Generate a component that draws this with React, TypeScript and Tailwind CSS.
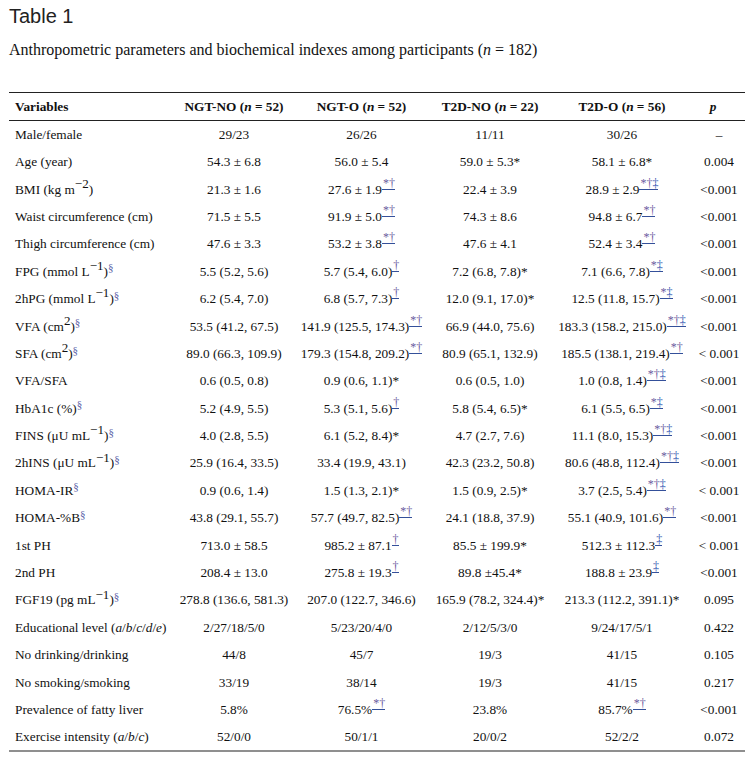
import React from 'react';

type Cell = { v: string; m?: string };
type Row = { label: React.ReactNode; cells: Cell[]; p: string };

// superscript link marks (*, †, ‡) drawn like the journal's underlined footnote links
const Mark: React.FC<{ s: string }> = ({ s }) => (
  <span className="inline-block align-[7px] leading-[12px] text-[12px] border-b border-[#34509a] pl-[1px]">
    {s.split('').map((c, i) => (
      <span key={i} className={c === '‡' ? 'text-[#2f55b0]' : 'text-[#6a5a9e]'}>
        {c}
      </span>
    ))}
  </span>
);

const Unit: React.FC<{ pre: string; exp: string; sect?: boolean }> = ({ pre, exp, sect }) => (
  <>
    {pre}
    <sup className="text-[13px] top-[-0.45em]">{exp}</sup>)
    {sect && <sup className="text-[11px] top-[-0.4em] text-[#5a5fa8]">§</sup>}
  </>
);

const Sect = () => <sup className="text-[11px] top-[-0.4em] text-[#5a5fa8]">§</sup>;

const c = (v: string, m?: string): Cell => ({ v, m });

const rows: Row[] = [
  { label: 'Male/female', cells: [c('29/23'), c('26/26'), c('11/11'), c('30/26')], p: '–' },
  { label: 'Age (year)', cells: [c('54.3 ± 6.8'), c('56.0 ± 5.4'), c('59.0 ± 5.3*'), c('58.1 ± 6.8*')], p: '0.004' },
  { label: <Unit pre="BMI (kg m" exp="−2" />, cells: [c('21.3 ± 1.6'), c('27.6 ± 1.9', '*†'), c('22.4 ± 3.9'), c('28.9 ± 2.9', '*†‡')], p: '<0.001' },
  { label: 'Waist circumference (cm)', cells: [c('71.5 ± 5.5'), c('91.9 ± 5.0', '*†'), c('74.3 ± 8.6'), c('94.8 ± 6.7', '*†')], p: '<0.001' },
  { label: 'Thigh circumference (cm)', cells: [c('47.6 ± 3.3'), c('53.2 ± 3.8', '*†'), c('47.6 ± 4.1'), c('52.4 ± 3.4', '*†')], p: '<0.001' },
  { label: <Unit pre="FPG (mmol L" exp="−1" sect />, cells: [c('5.5 (5.2, 5.6)'), c('5.7 (5.4, 6.0)', '†'), c('7.2 (6.8, 7.8)*'), c('7.1 (6.6, 7.8)', '*‡')], p: '<0.001' },
  { label: <Unit pre="2hPG (mmol L" exp="−1" sect />, cells: [c('6.2 (5.4, 7.0)'), c('6.8 (5.7, 7.3)', '†'), c('12.0 (9.1, 17.0)*'), c('12.5 (11.8, 15.7)', '*‡')], p: '<0.001' },
  { label: <Unit pre="VFA (cm" exp="2" sect />, cells: [c('53.5 (41.2, 67.5)'), c('141.9 (125.5, 174.3)', '*†'), c('66.9 (44.0, 75.6)'), c('183.3 (158.2, 215.0)', '*†‡')], p: '<0.001' },
  { label: <Unit pre="SFA (cm" exp="2" sect />, cells: [c('89.0 (66.3, 109.9)'), c('179.3 (154.8, 209.2)', '*†'), c('80.9 (65.1, 132.9)'), c('185.5 (138.1, 219.4)', '*†')], p: '< 0.001' },
  { label: 'VFA/SFA', cells: [c('0.6 (0.5, 0.8)'), c('0.9 (0.6, 1.1)*'), c('0.6 (0.5, 1.0)'), c('1.0 (0.8, 1.4)', '*†‡')], p: '<0.001' },
  { label: <>HbA1c (%)<Sect /></>, cells: [c('5.2 (4.9, 5.5)'), c('5.3 (5.1, 5.6)', '†'), c('5.8 (5.4, 6.5)*'), c('6.1 (5.5, 6.5)', '*‡')], p: '<0.001' },
  { label: <Unit pre="FINS (μU mL" exp="−1" sect />, cells: [c('4.0 (2.8, 5.5)'), c('6.1 (5.2, 8.4)*'), c('4.7 (2.7, 7.6)'), c('11.1 (8.0, 15.3)', '*†‡')], p: '<0.001' },
  { label: <Unit pre="2hINS (μU mL" exp="−1" sect />, cells: [c('25.9 (16.4, 33.5)'), c('33.4 (19.9, 43.1)'), c('42.3 (23.2, 50.8)'), c('80.6 (48.8, 112.4)', '*†‡')], p: '<0.001' },
  { label: <>HOMA-IR<Sect /></>, cells: [c('0.9 (0.6, 1.4)'), c('1.5 (1.3, 2.1)*'), c('1.5 (0.9, 2.5)*'), c('3.7 (2.5, 5.4)', '*†‡')], p: '< 0.001' },
  { label: <>HOMA-%B<Sect /></>, cells: [c('43.8 (29.1, 55.7)'), c('57.7 (49.7, 82.5)', '*†'), c('24.1 (18.8, 37.9)'), c('55.1 (40.9, 101.6)', '*†')], p: '<0.001' },
  { label: '1st PH', cells: [c('713.0 ± 58.5'), c('985.2 ± 87.1', '†'), c('85.5 ± 199.9*'), c('512.3 ± 112.3', '‡')], p: '< 0.001' },
  { label: '2nd PH', cells: [c('208.4 ± 13.0'), c('275.8 ± 19.3', '†'), c('89.8 ±45.4*'), c('188.8 ± 23.9', '‡')], p: '<0.001' },
  { label: <Unit pre="FGF19 (pg mL" exp="−1" sect />, cells: [c('278.8 (136.6, 581.3)'), c('207.0 (122.7, 346.6)'), c('165.9 (78.2, 324.4)*'), c('213.3 (112.2, 391.1)*')], p: '0.095' },
  { label: <>Educational level (<i>a</i>/<i>b</i>/<i>c</i>/<i>d</i>/<i>e</i>)</>, cells: [c('2/27/18/5/0'), c('5/23/20/4/0'), c('2/12/5/3/0'), c('9/24/17/5/1')], p: '0.422' },
  { label: 'No drinking/drinking', cells: [c('44/8'), c('45/7'), c('19/3'), c('41/15')], p: '0.105' },
  { label: 'No smoking/smoking', cells: [c('33/19'), c('38/14'), c('19/3'), c('41/15')], p: '0.217' },
  { label: 'Prevalence of fatty liver', cells: [c('5.8%'), c('76.5%', '*†'), c('23.8%'), c('85.7%', '*†')], p: '<0.001' },
  { label: <>Exercise intensity (<i>a</i>/<i>b</i>/<i>c</i>)</>, cells: [c('52/0/0'), c('50/1/1'), c('20/0/2'), c('52/2/2')], p: '0.072' },
];

const heads = [
  ['NGT-NO', '52'],
  ['NGT-O', '52'],
  ['T2D-NO', '22'],
  ['T2D-O', '56'],
];

export default function App() {
  return (
    <div className="w-[753px] h-[759px] bg-white pt-[5px] px-[9px] overflow-hidden">
      <h1 className="font-['Liberation_Sans',Arial,sans-serif] text-[20px] leading-[23px] text-[#222]">Table 1</h1>
      <p className="mt-[12px] font-['Liberation_Serif',serif] text-[16px] leading-[20px] text-[#111]">
        Anthropometric parameters and biochemical indexes among participants (<i>n</i> = 182)
      </p>

      <table className="mt-[32px] w-[736px] table-fixed border-collapse font-['Liberation_Serif',serif] text-[13.3px] text-[#111]">
        <colgroup>
          <col className="w-[165px]" />
          <col className="w-[120px]" />
          <col className="w-[135px]" />
          <col className="w-[122px]" />
          <col className="w-[142px]" />
          <col className="w-[52px]" />
        </colgroup>
        <thead>
          <tr className="h-[28px] border-t border-b border-[#222] font-bold leading-[27px]">
            <th className="text-left pl-[6px] font-bold">Variables</th>
            {heads.map(([g, n]) => (
              <th key={g} className="text-center font-bold whitespace-nowrap">
                {g} (<i>n</i> = {n})
              </th>
            ))}
            <th className="text-center font-bold pr-[12px]">
              <i>p</i>
            </th>
          </tr>
        </thead>
        <tbody className="border-b-[2px] border-[#8f8f8f]">
          {rows.map((r, i) => (
            <tr key={i} className="h-[27.4px] leading-[27px]">
              <td className="pl-[6px] whitespace-nowrap">{r.label}</td>
              {r.cells.map((cell, j) => (
                <td key={j} className="text-center whitespace-nowrap">
                  {cell.v}
                  {cell.m && <Mark s={cell.m} />}
                </td>
              ))}
              <td className="text-center whitespace-nowrap">{r.p}</td>
            </tr>
          ))}
        </tbody>
      </table>
    </div>
  );
}
